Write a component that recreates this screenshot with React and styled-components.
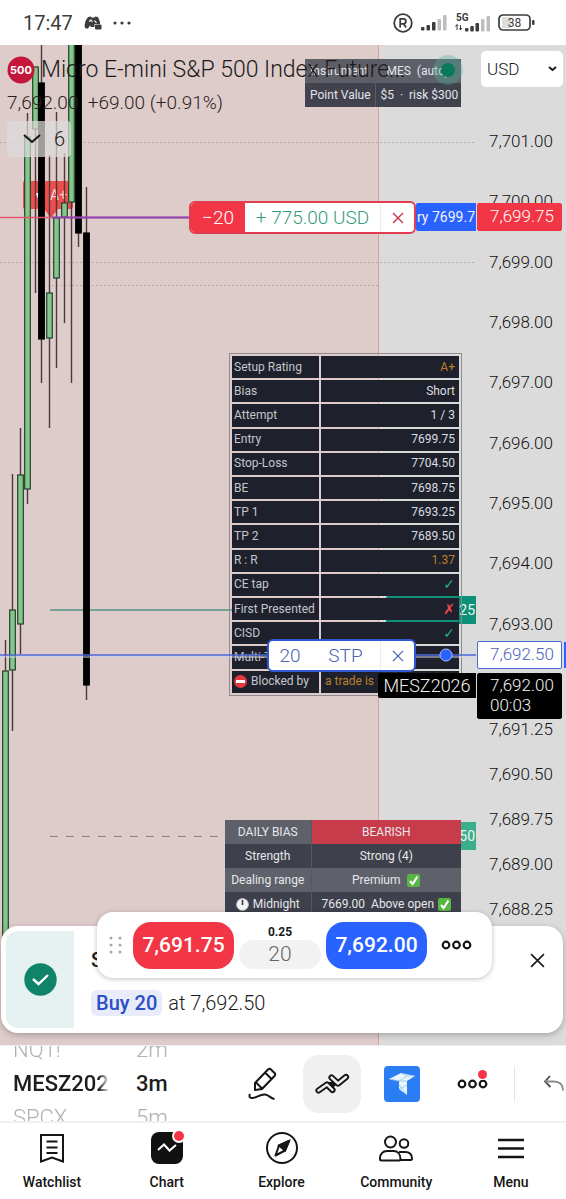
import React from "react";
import styled, { createGlobalStyle, css } from "styled-components";

const GlobalStyle = createGlobalStyle`
  *, *::before, *::after { box-sizing: border-box; }
  body {
    margin: 0;
    background: #fff;
    color: #1a1a1a;
    font-family: Roboto, "Liberation Sans", sans-serif;
  }
  button, input, select { font: inherit; color: inherit; }
  button { border: 0; padding: 0; background: none; cursor: pointer; }
  svg { display: block; flex: none; }
`;

const color = {
  red: "#f23645",
  blue: "#2962ff",
  teal: "#0c9077",
  pane: "#dbdbdb",
  zone: "#decccb",
};

const Page = styled.div`
  display: flex;
  flex-direction: column;
  min-height: 100vh;
`;

/* ---------- status bar ---------- */

const StatusBar = styled.header`
  display: flex;
  align-items: center;
  justify-content: space-between;
  height: 45px;
  padding: 0 31px 0 23px;
  color: #3c3c3c;
`;

const StatusGroup = styled.div`
  display: flex;
  align-items: center;
  gap: ${(p) => p.$gap}px;
`;

const Clock = styled.time`
  font-size: 20px;
  line-height: 24px;
`;

/* ---------- chart ---------- */

const Chart = styled.main`
  position: relative;
  display: flex;
  flex: 1;
  min-height: 1000px;
  overflow: hidden;
  background: ${color.pane};
`;

const Plot = styled.section`
  position: relative;
  flex: 1;
  min-width: 0;
`;

const Zone = styled.div`
  position: absolute;
  inset: 0 97px 0 0;
  border-right: 1px solid #e29a9c;
  background: ${color.zone};
`;

const Drawing = styled.svg`
  position: absolute;
  inset: 0;
  width: 100%;
  height: 100%;
`;

const Axis = styled.aside`
  position: relative;
  width: 90px;
  padding-top: 66px;
`;

const TickGroup = styled.ol`
  display: flex;
  flex-direction: column;
  height: ${(p) => p.$height}px;
  margin: 0 0 52px;
  padding: 0;
  list-style: none;
`;

const Tick = styled.li`
  display: flex;
  flex: 1;
  align-items: center;
  padding-left: 13px;
  font-size: 17px;
  font-weight: 300;
  color: #111;
`;

const PriceTag = styled.div`
  position: absolute;
  top: ${(p) => p.$top}px;
  left: 1px;
  right: 4px;
  padding: 1px 0 3px 12px;
  border: 1px solid ${(p) => p.$edge || p.$fill};
  border-radius: 2px;
  background: ${(p) => p.$fill};
  color: ${(p) => p.$ink};
  font-size: 17px;
  font-weight: 300;
  line-height: ${(p) => p.$line || 22}px;
`;

const AxisMark = styled.div`
  position: absolute;
  top: 597px;
  right: 0;
  width: 2px;
  height: 26px;
  background: ${color.blue};
`;

const LineTag = styled.div`
  position: absolute;
  top: ${(p) => p.$top}px;
  right: 0;
  width: ${(p) => p.$width}px;
  overflow: hidden;
  padding: 0 1px;
  border-radius: 2px 0 0 2px;
  background: ${(p) => p.$fill};
  color: #f3f3f3;
  font-size: ${(p) => p.$size || 14}px;
  font-weight: ${(p) => (p.$size ? 300 : 400)};
  line-height: ${(p) => p.$line || 28}px;
  text-align: ${(p) => p.$align || "right"};
  white-space: nowrap;
`;

const Signal = styled.div`
  position: absolute;
  top: 136px;
  left: 23px;
  width: 50px;
  padding-left: 27px;
  border-radius: 2px;
  background: rgba(242, 54, 54, 0.85);
  color: #ffd9d9;
  font-size: 14px;
  line-height: 28px;
`;

const Legend = styled.div`
  position: absolute;
  top: 9px;
  left: 7px;
  right: 0;
  display: flex;
  flex-direction: column;
  align-items: flex-start;
`;

const TitleRow = styled.div`
  display: flex;
  align-items: center;
  gap: 6px;
`;

const Title = styled.h1`
  margin: 0;
  font-size: 23px;
  font-weight: 300;
  line-height: 32px;
  white-space: nowrap;
`;

const Change = styled.p`
  margin: 6px 0 7px;
  font-size: 19px;
  font-weight: 300;
  line-height: 22px;
  white-space: pre;
  color: #2c2224;
`;

const Collapse = styled.button`
  display: flex;
  align-items: center;
  gap: 13px;
  width: 64px;
  height: 36px;
  padding-left: 16px;
  border-radius: 4px;
  background: rgba(220, 221, 219, 0.72);
  font-size: 20px;
  font-weight: 300;
`;

const InfoTable = styled.table`
  position: absolute;
  top: 14px;
  right: 15px;
  width: 156px;
  table-layout: fixed;
  border-collapse: collapse;
  color: #e4e5e9;
  font-size: 12px;

  th, td {
    height: 24px;
    padding: 0 0 0 5px;
    font-weight: 400;
    text-align: left;
    white-space: pre;
  }
  th { width: 70px; border-right: 1px solid #5a5c66; }
  tr:nth-child(odd) { background: rgba(80, 82, 92, 0.9); }
  tr:nth-child(even) { background: rgba(56, 58, 70, 0.95); }
`;

const SetupTable = styled.table`
  position: absolute;
  top: 308px;
  right: 14px;
  width: 233px;
  height: 343px;
  table-layout: fixed;
  border: 1px solid #8d8a92;
  border-collapse: separate;
  border-spacing: 2px;
  color: #c5c6cb;
  font-size: 12px;
  line-height: 14px;

  th, td {
    padding: 0 4px 1px;
    overflow: hidden;
    background: #1e212c;
    font-weight: 400;
    text-align: left;
    white-space: nowrap;
  }
  th { width: 87px; padding: 0 0 1px 2px; }
`;

const tone = {
  plain: "#dcdde0",
  warn: "#b9802a",
  good: "#22b873",
  bad: "#f04a50",
};

const Value = styled.td`
  && {
    color: ${(p) => tone[p.$tone]};
    text-align: ${(p) => (p.$start ? "left" : "right")};
    ${(p) => p.$mark && css`font-family: "DejaVu Sans", sans-serif; font-size: 14px; font-weight: 700;`}
  }
`;

const CellLine = styled.span`
  display: flex;
  align-items: center;
  justify-content: ${(p) => (p.$center ? "center" : "flex-start")};
  gap: 4px;
`;

const BiasTable = styled.table`
  position: absolute;
  top: 775px;
  right: 15px;
  width: 236px;
  border-collapse: collapse;
  color: #e6e7ea;
  font-size: 12px;

  th, td {
    height: 24px;
    padding: 0;
    font-weight: 400;
    text-align: center;
    white-space: pre;
  }
  th { width: 86px; border-right: 1px solid #555863; }
  tr:nth-child(odd) { background: #5e616a; }
  tr:nth-child(even) { background: #3e414c; }
  tr:first-child td { background: #c83b4a; }
`;

const Order = styled.div`
  position: absolute;
  top: ${(p) => p.$top}px;
  right: 60px;
  display: flex;
  height: 33px;
  overflow: hidden;
  border: 2px solid ${(p) => p.$edge};
  border-radius: 6px;
  background: #fff;
  color: ${(p) => p.$ink};
  font-size: 19px;
  font-weight: 300;
  line-height: 29px;
  text-align: center;
`;

const OrderPart = styled.span`
  width: ${(p) => p.$width}px;
  ${(p) => p.$solid && css`background: ${color.red}; color: #fff;`}
`;

const OrderClose = styled.button`
  display: flex;
  align-items: center;
  justify-content: center;
  width: 34px;
  border-left: 1px solid #ececef;
`;

const Currency = styled.label`
  position: absolute;
  top: 6px;
  right: 3px;
  display: flex;
  align-items: center;
  width: 82px;
  height: 36px;
  border-radius: 5px;
  background: #fff;

  select {
    width: 100%;
    height: 100%;
    padding: 0 6px;
    border: 0;
    background: none;
    appearance: none;
    font-size: 17px;
    font-weight: 300;
  }
  svg { position: absolute; right: 6px; pointer-events: none; }
`;

/* ---------- toast and trading bar ---------- */

const Toast = styled.section`
  position: absolute;
  right: 3px;
  bottom: 12px;
  left: 1px;
  display: flex;
  gap: 17px;
  height: 107px;
  padding: 5px;
  border-radius: 17px;
  background: #fff;
  box-shadow: 0 2px 6px rgba(0, 0, 0, 0.25);
`;

const ToastIcon = styled.div`
  display: flex;
  align-items: center;
  justify-content: center;
  width: 68px;
  border-radius: 12px 0 0 12px;
  background: #e6f1f1;
`;

const ToastBody = styled.div`
  flex: 1;
  padding-top: 14px;
`;

const ToastTitle = styled.h2`
  margin: 0 0 15px;
  font-size: 20px;
  font-weight: 500;
  line-height: 30px;
`;

const ToastText = styled.p`
  display: flex;
  align-items: center;
  gap: 6px;
  margin: 0;
  font-size: 20px;
  font-weight: 300;
  line-height: 26px;
`;

const Side = styled.strong`
  padding: 0 5px;
  border-radius: 6px;
  background: #e7ebfa;
  color: #2b4fc6;
  font-weight: 500;
`;

const ToastClose = styled.button`
  align-self: flex-start;
  margin: 22px 13px 0 0;
`;

const TradeBar = styled.form`
  position: absolute;
  bottom: 67px;
  left: 97px;
  display: flex;
  align-items: center;
  height: 66px;
  padding: 0 20px 0 11px;
  border-radius: 16px;
  background: #fff;
  box-shadow: 0 1px 5px rgba(0, 0, 0, 0.25);
`;

const TradeButton = styled.button`
  width: 101px;
  height: 47px;
  border-radius: 18px;
  background: ${(p) => p.$fill};
  color: #fff;
  font-size: 21px;
  font-weight: 500;
`;

const MoreButton = styled.button`
  padding-left: 14px;
`;

const Quantity = styled.label`
  display: flex;
  flex-direction: column;
  align-items: center;
  width: 82px;
  margin: 0 5px;
  padding-top: 2px;
  font-size: 12px;
  font-weight: 700;
  line-height: 16px;

  input {
    width: 100%;
    height: 29px;
    padding: 0;
    border: 0;
    border-radius: 15px;
    background: #f2f2f2;
    color: #666;
    font-size: 21px;
    font-weight: 300;
    text-align: center;
  }
`;

/* ---------- toolbar ---------- */

const Toolbar = styled.div`
  display: flex;
  align-items: center;
  height: 78px;
  padding-left: 13px;
  overflow: hidden;
  border-top: 1px solid #eee;
  border-bottom: 2px solid #f0f0f0;
`;

const Wheel = styled.ul`
  display: flex;
  flex: none;
  flex-direction: column;
  justify-content: center;
  width: ${(p) => p.$width}px;
  height: 75px;
  margin: 0 26px 0 0;
  padding: 0;
  overflow: hidden;
  list-style: none;
  color: #b0b0b0;
  font-size: 22px;
  font-weight: 300;
  line-height: 34px;
  white-space: nowrap;
  ${(p) => p.$fade && css`mask-image: linear-gradient(to right, #000 88%, transparent);`}
`;

const WheelItem = styled.li`
  flex: none;
  ${(p) => p.$current && css`color: #1d1d1d; font-weight: 500;`}
`;

const Tools = styled.div`
  display: flex;
  flex: 1;
  min-width: 0;
  align-items: center;
  padding-left: 25px;
`;

const Tool = styled.button`
  position: relative;
  display: flex;
  flex: none;
  align-items: center;
  justify-content: center;
  width: ${(p) => p.$width || 58}px;
  height: 58px;
  border-radius: 16px;
  background: ${(p) => (p.$active ? "#f0f0f0" : "none")};
`;

const Rule = styled.span`
  flex: none;
  width: 1px;
  height: 36px;
  margin: 0 26px 0 13px;
  background: #e6e6e6;
`;

const Badge = styled.i`
  position: absolute;
  top: ${(p) => p.$top}px;
  left: 50%;
  width: ${(p) => p.$size}px;
  height: ${(p) => p.$size}px;
  margin-left: ${(p) => p.$shift}px;
  border-radius: 50%;
  background: ${color.red};
  box-shadow: 0 0 0 ${(p) => p.$ring}px #fff;
`;

/* ---------- bottom navigation ---------- */

const Nav = styled.nav`
  display: flex;
  justify-content: space-between;
  height: 76px;
  padding: 8px 10px 0 7px;
`;

const NavLink = styled.a`
  position: relative;
  display: flex;
  flex-direction: column;
  align-items: center;
  gap: 8px;
  width: 90px;
  color: #151515;
  font-size: 14px;
  font-weight: 500;
  line-height: 18px;
  text-decoration: none;
`;

/* ---------- icons ---------- */

const Cross = ({ size, width = 1.5 }) => (
  <svg width={size} height={size} viewBox="0 0 14 14" fill="none" stroke="currentColor" strokeWidth={width} aria-hidden="true">
    <path d="M1 1l12 12M13 1L1 13" />
  </svg>
);

const Rings = () => (
  <svg width="31" height="12" viewBox="0 0 31 12" fill="none" stroke="#151515" strokeWidth="2.2" aria-hidden="true">
    <circle cx="5" cy="6" r="3.3" />
    <circle cx="15.5" cy="6" r="3.3" />
    <circle cx="26" cy="6" r="3.3" />
  </svg>
);

const CheckBox = () => (
  <svg width="13" height="13" viewBox="0 0 13 13" aria-hidden="true">
    <rect width="13" height="13" rx="2" fill="#58b644" />
    <path d="M3 7l2.6 3L10.4 2.6" fill="none" stroke="#fff" strokeWidth="2" />
  </svg>
);

const ClockFace = () => (
  <svg width="13" height="13" viewBox="0 0 13 13" aria-hidden="true">
    <circle cx="6.5" cy="6.5" r="5.9" fill="#f4f4f6" stroke="#b9bcc4" />
    <path d="M6.5 2v5" stroke="#33363f" strokeWidth="1.6" />
  </svg>
);

const NoEntry = () => (
  <svg width="13" height="13" viewBox="0 0 13 13" aria-hidden="true">
    <circle cx="6.5" cy="6.5" r="6.5" fill="#e0393e" />
    <rect x="2" y="5" width="9" height="3" rx="0.6" fill="#fff" />
  </svg>
);

const SignalBars = () => (
  <svg width="26" height="16" viewBox="0 0 26 16" fill="#3c3c3c" aria-hidden="true">
    <rect x="0" y="12" width="3.5" height="3.5" rx="1" />
    <rect x="5.5" y="10" width="3.5" height="5.5" rx="1" />
    <rect x="11" y="7" width="3.5" height="8.5" rx="1" />
    <rect x="16.5" y="4" width="3.5" height="11.5" rx="1" fill="#bdbdbd" />
    <rect x="22" y="0" width="3.5" height="15.5" rx="1" fill="#bdbdbd" />
  </svg>
);

/* ---------- data ---------- */

const upperTicks = ["7,701.00", "7,700.00", "7,699.00", "7,698.00", "7,697.00", "7,696.00", "7,695.00", "7,694.00", "7,693.00"];
const lowerTicks = ["7,691.25", "7,690.50", "7,689.75", "7,689.00", "7,688.25"];

// x, wick top, wick bottom, body top, body bottom, rising
const candles = [
  [5, 595, 900, 626, 900, true],
  [12, 429, 686, 565, 625, true],
  [20, 383, 609, 430, 579, true],
  [27, 68, 459, 92, 444, true],
  [35, 22, 248, 22, 84, true],
  [41, 0, 338, 38, 294, false],
  [49, 110, 383, 248, 293, true],
  [56, 67, 323, 173, 233, true],
  [64, 108, 278, 158, 172, true],
  [71, -5, 338, -5, 157, true],
  [78, -5, 202, -5, 188, false],
  [86, 142, 655, 188, 640, false],
];

const setup = [
  ["Setup Rating", "A+", "warn"],
  ["Bias", "Short", "plain"],
  ["Attempt", "1 / 3", "plain"],
  ["Entry", "7699.75", "plain"],
  ["Stop-Loss", "7704.50", "plain"],
  ["BE", "7698.75", "plain"],
  ["TP 1", "7693.25", "plain"],
  ["TP 2", "7689.50", "plain"],
  ["R : R", "1.37", "warn"],
  ["CE tap", "✓", "good"],
  ["First Presented", "✗", "bad"],
  ["CISD", "✓", "good"],
  ["Multi-TF", "✓", "good"],
];

/* ---------- parts ---------- */

const Candle = ({ data: [x, wickTop, wickBottom, top, bottom, rising] }) => (
  <g>
    <path d={`M${x + 0.5} ${wickTop}V${wickBottom}`} stroke="#4a3a3c" strokeWidth="1.4" />
    <rect
      x={x - 2.3}
      y={top}
      width="5.6"
      height={bottom - top}
      fill={rising ? "#85c68c" : "#000"}
      stroke={rising ? "#22402a" : "#000"}
      strokeWidth="1.2"
    />
  </g>
);

const ChartDrawing = () => (
  <Drawing aria-hidden="true">
    <g stroke="#b9a9aa" strokeWidth="1" strokeDasharray="2 2">
      <line x1="0" x2="100%" y1="97.5" y2="97.5" />
      <line x1="0" x2="100%" y1="217.5" y2="217.5" />
      <line x1="52" x2="379" y1="240.5" y2="240.5" />
    </g>
    <line x1="50" x2="218" y1="791.5" y2="791.5" stroke="#8b8082" strokeDasharray="8 8" />
    <line x1="50" x2="240" y1="565" y2="565" stroke="#4f9683" strokeWidth="1.3" />
  </Drawing>
);

const CandleDrawing = () => (
  <Drawing aria-hidden="true">
    <path d="M44 164h14l-7 9z" fill="#ee4a4c" />
    <path d="M35 148h7l-3 7z" fill="#fff" />
    {candles.map((c) => <Candle key={c[0]} data={c} />)}
    <line x1="0" x2="100%" y1="172.5" y2="172.5" stroke="#e0566a" strokeWidth="1.4" />
    <line x1="52" x2="200" y1="172.5" y2="172.5" stroke="#8a45b5" strokeWidth="2" />
  </Drawing>
);

function StatusIcons() {
  return (
    <StatusGroup $gap={8}>
      <svg width="20" height="20" viewBox="0 0 20 20" fill="none" stroke="#3c3c3c" strokeWidth="1.8" aria-hidden="true">
        <circle cx="10" cy="10" r="8.8" />
        <path d="M7.2 14.5V5.8h3.2a2.5 2.5 0 010 5H7.2M10.5 10.8l2.6 3.7" />
      </svg>
      <SignalBars />
      <svg width="35" height="20" viewBox="0 0 35 20" fill="#3c3c3c" aria-hidden="true">
        <text x="1" y="8" fontSize="10" fontWeight="700">5G</text>
        <path d="M2 12v5M0.5 13.5L2 11.5l1 1.5M5.5 12v5M4.5 15.5l1 1.5 1.5-2" stroke="#3c3c3c" fill="none" />
        <rect x="10" y="15" width="3.5" height="3.5" rx="1" />
        <rect x="15.3" y="13" width="3.5" height="5.5" rx="1" />
        <rect x="20.5" y="10" width="3.5" height="8.5" rx="1" />
        <rect x="26" y="6" width="3.5" height="12.5" rx="1" fill="#bdbdbd" />
        <rect x="31.5" y="3" width="3.5" height="15.5" rx="1" fill="#bdbdbd" />
      </svg>
      <svg width="37" height="17" viewBox="0 0 37 17" aria-hidden="true">
        <rect x="4" y="3" width="9" height="11" fill="#dedede" />
        <rect x="1" y="1" width="31" height="15" rx="4" fill="none" stroke="#3c3c3c" strokeWidth="1.7" />
        <rect x="34" y="6" width="2.5" height="5" rx="1" fill="#3c3c3c" />
        <text x="16.5" y="12.5" fontSize="12" textAnchor="middle" fill="#3c3c3c">38</text>
      </svg>
    </StatusGroup>
  );
}

export default function App() {
  return (
    <Page>
      <GlobalStyle />

      <StatusBar>
        <StatusGroup $gap={11}>
          <Clock>17:47</Clock>
          <svg width="18" height="14" viewBox="0 0 18 14" aria-hidden="true">
            <path d="M4 1l3-.6.6 1h3l.6-1L14 1l2 5v2h-5.5v3H7l-1-1.5L4 12.500H1.500L.5 10 1.500 5z" fill="#3c3c3c" />
            <path d="M5 5.500l2-1.500 1.500 2M10.500 4.500l2 2.500" fill="none" stroke="#fff" strokeWidth="1.200" />
            <rect x="11" y="8.5" width="6.5" height="5" rx="1" fill="#3c3c3c" />
          </svg>
          <svg width="18" height="4" viewBox="0 0 18 4" fill="#3c3c3c" aria-hidden="true">
            <circle cx="2" cy="2" r="1.6" />
            <circle cx="9" cy="2" r="1.6" />
            <circle cx="16" cy="2" r="1.6" />
          </svg>
        </StatusGroup>
        <StatusIcons />
      </StatusBar>

      <Chart>
        <Plot>
          <Zone />
          <ChartDrawing />
          <Signal>A+</Signal>
          <CandleDrawing />

          <LineTag $top={158} $width={60} $fill={color.blue} $align="left">ry 7699.75</LineTag>
          <LineTag $top={551} $width={90} $fill={color.teal}>7693.25</LineTag>
          <LineTag $top={777} $width={90} $fill="#3bae8d">7689.50</LineTag>

          <InfoTable>
            <tbody>
              <tr><th scope="row">Instrument</th><td>{"  MES  (auto)"}</td></tr>
              <tr><th scope="row">Point Value</th><td>{"$5  ·  risk $300"}</td></tr>
            </tbody>
          </InfoTable>

          <SetupTable>
            <tbody>
              {setup.map(([name, value, kind]) => (
                <tr key={name}>
                  <th scope="row">{name}</th>
                  <Value $tone={kind} $mark={kind === "good" || kind === "bad"}>{value}</Value>
                </tr>
              ))}
              <tr>
                <th scope="row"><CellLine><NoEntry />Blocked by</CellLine></th>
                <Value $tone="warn" $start>a trade is active</Value>
              </tr>
            </tbody>
          </SetupTable>

          <BiasTable>
            <tbody>
              <tr><th scope="row">DAILY BIAS</th><td>BEARISH</td></tr>
              <tr><th scope="row">Strength</th><td>Strong (4)</td></tr>
              <tr><th scope="row">Dealing range</th><td><CellLine $center>Premium <CheckBox /></CellLine></td></tr>
              <tr>
                <th scope="row"><CellLine $center><ClockFace />Midnight</CellLine></th>
                <td><CellLine $center>{"7669.00  Above open"}<CheckBox /></CellLine></td>
              </tr>
            </tbody>
          </BiasTable>

          <Drawing aria-hidden="true">
            <line x1="0" x2="100%" y1="612" y2="612" stroke="#cfd3ea" strokeWidth="2" strokeOpacity="0.5" />
            <line x1="0" x2="100%" y1="610" y2="610" stroke="#4d68d8" strokeWidth="1.6" />
            <svg x="100%" overflow="visible">
              <circle cx="-28" cy="25" r="15" fill="#4db39a" fillOpacity="0.35" />
              <circle cx="-28" cy="25" r="7" fill="#077a5c" />
              <circle cx="-30" cy="610" r="6" fill={color.blue} stroke="#a9bdf5" />
            </svg>
          </Drawing>

          <Legend>
            <TitleRow>
              <svg width="28" height="28" viewBox="0 0 28 28" aria-hidden="true">
                <circle cx="14" cy="14" r="13.5" fill="#c4163a" />
                <text x="14" y="18" fontSize="11" fontWeight="700" fontFamily="Inter, sans-serif" textAnchor="middle" fill="#fff">500</text>
              </svg>
              <Title>Micro E-mini S&amp;P 500 Index Future...</Title>
            </TitleRow>
            <Change>{"7,692.00  +69.00 (+0.91%)"}</Change>
            <Collapse type="button" aria-label="Show 6 indicators">
              <svg width="18" height="10" viewBox="0 0 18 10" fill="none" stroke="#151515" strokeWidth="2" aria-hidden="true">
                <path d="M1 1l8 7 8-7" />
              </svg>
              6
            </Collapse>
          </Legend>

          <Order $top={156} $edge="#e23c50" $ink="#369a7c">
            <OrderPart $solid $width={54}>−20</OrderPart>
            <OrderPart $width={135}>+ 775.00 USD</OrderPart>
            <OrderClose type="button" aria-label="Close position">
              <svg width="12" height="12" viewBox="0 0 12 12" stroke="#c9404f" strokeWidth="1.5" aria-hidden="true">
                <path d="M1 1l10 10M11 1L1 11" />
              </svg>
            </OrderClose>
          </Order>

          <Order $top={594} $edge="#3158cf" $ink="#4a63b5">
            <OrderPart $width={42}>20</OrderPart>
            <OrderPart $width={69}>STP</OrderPart>
            <OrderClose type="button" aria-label="Cancel order"><Cross size={12} /></OrderClose>
          </Order>

          <LineTag $top={628} $width={98} $fill="#000" $size={18} $line={25} $align="center">MESZ2026</LineTag>
        </Plot>

        <Axis>
          <TickGroup $height={543}>{upperTicks.map((t) => <Tick key={t}>{t}</Tick>)}</TickGroup>
          <TickGroup $height={226}>{lowerTicks.map((t) => <Tick key={t}>{t}</Tick>)}</TickGroup>
          <PriceTag $top={158} $fill={color.red} $ink="#fff">7,699.75</PriceTag>
          <PriceTag $top={596} $fill="#fff" $edge="#4a68d6" $ink="#4a63b5">7,692.50</PriceTag>
          <PriceTag $top={628} $fill="#000" $ink="#f2f2f2" $line={20}>7,692.00<br />00:03</PriceTag>
          <AxisMark />
          <Currency>
            <select aria-label="Currency" defaultValue="USD">
              <option>USD</option>
            </select>
            <svg width="9" height="6" viewBox="0 0 9 6" fill="none" stroke="#151515" strokeWidth="1.8" aria-hidden="true">
              <path d="M1 1l3.5 3L8 1" />
            </svg>
          </Currency>
        </Axis>

        <Toast role="status">
          <ToastIcon>
            <svg width="33" height="33" viewBox="0 0 33 33" aria-hidden="true">
              <circle cx="16.5" cy="16.5" r="16.2" fill="#0f8466" />
              <path d="M9 16l5.5 5L24 12" fill="none" stroke="#fff" strokeWidth="2.4" />
            </svg>
          </ToastIcon>
          <ToastBody>
            <ToastTitle>Stop order</ToastTitle>
            <ToastText><Side>Buy 20</Side>at 7,692.50</ToastText>
          </ToastBody>
          <ToastClose type="button" aria-label="Dismiss"><Cross size={15} /></ToastClose>
        </Toast>

        <TradeBar onSubmit={(e) => e.preventDefault()}>
          <svg width="25" height="18" viewBox="0 0 25 18" fill="#a9a9a9" aria-hidden="true">
            {[2, 9, 16].map((y) => (
              <g key={y}>
                <circle cx="3" cy={y} r="1.5" />
                <circle cx="12" cy={y} r="1.5" />
              </g>
            ))}
          </svg>
          <TradeButton type="button" $fill={color.red}>7,691.75</TradeButton>
          <Quantity>
            0.25
            <input type="text" inputMode="numeric" defaultValue="20" />
          </Quantity>
          <TradeButton type="button" $fill={color.blue}>7,692.00</TradeButton>
          <MoreButton type="button" aria-label="More order options"><Rings /></MoreButton>
        </TradeBar>
      </Chart>

      <Toolbar>
        <Wheel $width={97} $fade>
          <WheelItem>NQ1!</WheelItem>
          <WheelItem $current>MESZ2026</WheelItem>
          <WheelItem>SPCX</WheelItem>
        </Wheel>
        <Wheel $width={36}>
          <WheelItem>2m</WheelItem>
          <WheelItem $current>3m</WheelItem>
          <WheelItem>5m</WheelItem>
        </Wheel>
        <Tools>
          <Tool type="button" aria-label="Draw" $width={80}>
            <svg width="30" height="34" viewBox="0 0 30 34" fill="none" stroke="#151515" strokeWidth="2" strokeLinejoin="round" aria-hidden="true">
              <path d="M7 23v-7L20 2.500c1-1 2-1 3 0l3.500 3.500c1 1 1 2 0 3L14 22l-7 1zM8 15.500l6.500 6.500M17 5.500l6 6" />
              <path d="M2 27c-1.500 3 .5 4.500 3 4 4-.8 8-4 12-3.500 4 .5 5 3.500 9.500 4.500" />
            </svg>
          </Tool>
          <Tool type="button" aria-label="Indicators" $active>
            <svg width="36" height="24" viewBox="0 0 36 24" fill="none" strokeLinecap="round" strokeLinejoin="round" aria-hidden="true">
              <g stroke="#151515" strokeWidth="6.2">
                <path d="M4.500 18.500l8.500-6 5.500 5.500" />
                <path d="M17.500 5.500l6.500 6 8-6.500" />
              </g>
              <path d="M12 11l6-1.500 4 3.500-3 3z" fill="#151515" />
              <g stroke="#f0f0f0" strokeWidth="2.4">
                <path d="M4.500 18.500l8.500-6 5.500 5.500" />
                <path d="M17.500 5.500l6.500 6 8-6.500" />
              </g>
            </svg>
          </Tool>
          <Tool type="button" aria-label="Broker" $width={82}>
            <svg width="36" height="36" viewBox="0 0 36 36" aria-hidden="true">
              <rect width="36" height="36" rx="4" fill="#2a7df2" />
              <path d="M5 13L17 7l14 3-8 5v14l-8-6v-8z" fill="#e9f6fb" />
              <path d="M5 13l10 2 8-5h8M15 15h8M15 23l8-4M15 19l8 10M17 7l6 3" fill="none" stroke="#8fc4ee" strokeWidth="0.8" />
            </svg>
          </Tool>
          <Tool type="button" aria-label="More tools">
            <Rings />
            <Badge $top={15} $shift={6} $size={9} $ring={1} />
          </Tool>
          <Rule />
          <Tool type="button" aria-label="Undo" $width={30}>
            <svg width="26" height="18" viewBox="0 0 26 18" fill="none" aria-hidden="true">
              <path d="M7 1L2 6.500l5.500 5.500" stroke="#4a4a4a" strokeWidth="1.800" />
              <path d="M2 6.500h9c6 0 9 3 9 9" stroke="#8a8a8a" strokeWidth="1.800" />
            </svg>
          </Tool>
        </Tools>
      </Toolbar>

      <Nav>
        <NavLink href="#watchlist">
          <svg width="32" height="34" viewBox="0 0 32 34" fill="none" stroke="#151515" strokeWidth="2" aria-hidden="true">
            <path d="M5 4h22v26.5l-11-4-11 4zM10.5 10.5h11M10.5 16.5h11M10.5 22h11" />
          </svg>
          Watchlist
        </NavLink>
        <NavLink href="#chart" aria-current="page">
          <svg width="32" height="34" viewBox="0 0 32 34" aria-hidden="true">
            <rect x="0" y="1" width="32" height="32" rx="8" fill="#111" />
            <path d="M7 19l6-5.500 5.500 6L25 14" fill="none" stroke="#fff" strokeWidth="2" />
          </svg>
          Chart
          <Badge $top={0} $shift={7} $size={10} $ring={2} />
        </NavLink>
        <NavLink href="#explore">
          <svg width="32" height="34" viewBox="0 0 32 34" fill="none" stroke="#151515" strokeWidth="2" aria-hidden="true">
            <circle cx="16" cy="17" r="15" />
            <path d="M23 10l-4 9.500-9.500 5L13 14.500z" strokeLinejoin="round" />
            <path d="M23 10l-4 9.500-6-5z" fill="#151515" />
          </svg>
          Explore
        </NavLink>
        <NavLink href="#community">
          <svg width="34" height="34" viewBox="0 0 34 34" fill="none" stroke="#151515" strokeWidth="2" aria-hidden="true">
            <circle cx="11.5" cy="11" r="5.5" />
            <circle cx="25" cy="12.5" r="4.3" />
            <path d="M1 28c-.3-5 3-8 7-8h6.500c4 0 7 3 7 8 0 1-.5 1.500-1.500 1.500H2.500c-1 0-1.500-.5-1.500-1.500zM20 21h6c4 0 7 2 7 6.500 0 1-.5 1.500-1.500 1.500H21" />
          </svg>
          Community
        </NavLink>
        <NavLink href="#menu">
          <svg width="32" height="34" viewBox="0 0 32 34" stroke="#151515" strokeWidth="2.5" aria-hidden="true">
            <path d="M3 9h26M3 17.5h26M3 26h26" />
          </svg>
          Menu
        </NavLink>
      </Nav>
    </Page>
  );
}
